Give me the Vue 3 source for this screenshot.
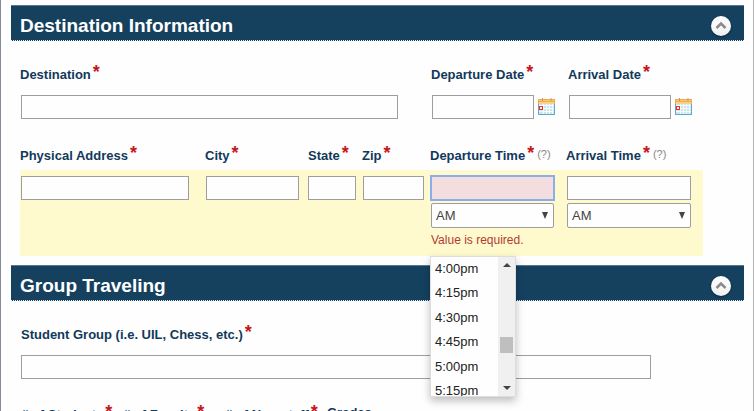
<script setup>
import { ref } from 'vue'

const tripDates = [
  { id: 'departure-date', label: 'Departure Date' },
  { id: 'arrival-date', label: 'Arrival Date' }
]
const address = [
  { id: 'street', label: 'Physical Address' },
  { id: 'city', label: 'City' },
  { id: 'state', label: 'State' },
  { id: 'zip', label: 'Zip' }
]
const tripTimes = [
  { id: 'departure-time', label: 'Departure Time' },
  { id: 'arrival-time', label: 'Arrival Time' }
]
const times = ['4:00pm', '4:15pm', '4:30pm', '4:45pm', '5:00pm', '5:15pm']
const counts = ['# of Students', '# of Faculty', '# of Non-staff']
const departureTime = ref('')

function pick(time) {
  departureTime.value = time
}
</script>

<template>
  <main class="page">
    <section>
      <header class="bar">
        <h2>Destination Information</h2>
        <button type="button" class="toggle" aria-label="Collapse Destination Information">
          <svg viewBox="0 0 20 20"><path d="M5.500 12 10 7.500l4.500 4.500" /></svg>
        </button>
      </header>

      <div class="form">
        <div class="trip">
          <div class="cell wide">
            <label for="destination">Destination<b class="star">*</b></label>
            <input id="destination" type="text" />
          </div>
          <div v-for="d in tripDates" :key="d.id" class="cell">
            <label :for="d.id">{{ d.label }}<b class="star">*</b></label>
            <div class="date">
              <input :id="d.id" type="text" />
              <button type="button" class="calendar" :aria-label="d.label">
                <svg viewBox="0 0 18 18">
                  <rect x="0" y="3" width="17" height="14" fill="#5eaacb" />
                  <rect x="1" y="5" width="15" height="11" fill="#c9e6ec" />
                  <rect x="0" y="1" width="17" height="5" fill="#f5a850" />
                  <rect x="1" y="2" width="15" height="1" fill="#fbd04e" />
                  <rect x="1" y="4" width="15" height="2" fill="#fbcf93" />
                  <path d="M4.500 0v3M13 0v3" stroke="#a79e9b" />
                  <path d="M1 7.500h15M1 10.500h15M1 13.500h15M5.500 6v10M8.500 6v10M11.500 6v10M14.500 6v10" stroke="#f4fbfc" />
                  <rect x="1.500" y="8.500" width="3" height="3" fill="#fff" stroke="#ef3028" />
                </svg>
              </button>
            </div>
          </div>
        </div>

        <div class="columns names">
          <label v-for="f in address" :key="f.id" :for="f.id">{{ f.label }}<b class="star">*</b></label>
          <label v-for="t in tripTimes" :key="t.id" :for="t.id">{{ t.label }}<b class="star">*</b><span class="hint">(?)</span></label>
        </div>
        <div class="columns fields">
          <div v-for="f in address" :key="f.id" class="field" :class="f.id">
            <input :id="f.id" type="text" />
          </div>
          <div class="field time">
            <input id="departure-time" v-model="departureTime" class="invalid" type="text" />
            <div class="select">
              <select aria-label="Departure AM or PM"><option>AM</option><option>PM</option></select>
            </div>
            <p class="error">Value is required.</p>
            <div class="menu">
              <ul>
                <li v-for="time in times" :key="time">
                  <button type="button" @click="pick(time)">{{ time }}</button>
                </li>
              </ul>
              <div class="track">
                <i class="up"></i>
                <i class="thumb"></i>
                <i class="down"></i>
              </div>
            </div>
          </div>
          <div class="field time">
            <input id="arrival-time" type="text" />
            <div class="select">
              <select aria-label="Arrival AM or PM"><option>AM</option><option>PM</option></select>
            </div>
          </div>
        </div>
      </div>
    </section>

    <section>
      <header class="bar second">
        <h2>Group Traveling</h2>
        <button type="button" class="toggle" aria-label="Collapse Group Traveling">
          <svg viewBox="0 0 20 20"><path d="M5.500 12 10 7.500l4.500 4.500" /></svg>
        </button>
      </header>
      <div class="form group">
        <label for="student-group">Student Group (i.e. UIL, Chess, etc.)<b class="star">*</b></label>
        <input id="student-group" type="text" />
        <div class="counts">
          <span v-for="c in counts" :key="c">{{ c }}<b class="star">*</b></span>
          <span class="grades">Grades</span>
        </div>
      </div>
    </section>
  </main>
</template>

<style>
body {
  margin: 0;
  background: #fff;
}
</style>

<style scoped>
* {
  box-sizing: border-box;
}
.page {
  height: 100vh;
  overflow: hidden;
  padding: 5px 9px 0 10px;
  border-left: 1px solid #858b98;
  border-right: 1px solid #b4b4b4;
  background: #fefefe;
  color: #12395a;
  font-family: "Liberation Sans", Arial, sans-serif;
  font-size: 13px;
}
.bar {
  display: flex;
  align-items: center;
  justify-content: space-between;
  height: 36px;
  padding: 5px 13px 0 9px;
  border-top: 1px solid #59788f;
  border-bottom: 1px dotted #e8eef2;
  background: #15415f;
}
.second {
  margin-top: 9px;
}
h2 {
  margin: 0;
  color: #fff;
  font-size: 19px;
  line-height: 24px;
}
.toggle {
  width: 20px;
  height: 20px;
  padding: 0;
  border: 0;
  border-radius: 50%;
  background: linear-gradient(#fff, #f0f0f0);
  box-shadow: 0 1px 2px #0a2438;
}
.toggle svg {
  display: block;
  fill: none;
  stroke: #8b8b8b;
  stroke-width: 2.5;
}
.form {
  padding: 0 41px 0 9px;
}
label,
.counts span {
  display: block;
  font-weight: bold;
  line-height: 16px;
  white-space: nowrap;
}
.star {
  position: relative;
  top: -1px;
  margin-left: 2px;
  color: #c4161c;
  font-size: 18px;
  line-height: 1px;
}
.hint {
  margin-left: 3px;
  color: #888;
  font-size: 11px;
  font-weight: normal;
  line-height: 1px;
  vertical-align: 2px;
}
input,
select {
  display: block;
  width: 100%;
  height: 24px;
  margin: 0;
  padding: 0 4px;
  border: 1px solid #9d9da2;
  border-radius: 0;
  background: #fefefe;
  color: #444;
  font: inherit;
  outline: 0;
}
.trip {
  display: grid;
  grid-template-columns: 399fr 125fr 125fr;
  column-gap: 12px;
  padding: 26px 10px 0 0;
}
.cell input {
  margin-top: 12px;
}
.wide {
  padding-right: 21px;
}
.wide input {
  width: calc(100% - 1px);
  margin-left: 1px;
}
.date {
  display: flex;
  align-items: flex-end;
  gap: 4px;
  padding-left: 1px;
}
.calendar {
  flex: none;
  width: 18px;
  height: 18px;
  margin-bottom: 3px;
  padding: 0;
  border: 0;
  background: none;
}
.calendar svg {
  display: block;
}
.columns {
  display: grid;
  grid-template-columns: 185fr 103fr 54fr 68fr 136fr 137fr;
}
.names {
  padding: 29px 0 6px;
}
.fields {
  height: 86px;
  padding-top: 6px;
  background: #fffacd;
}
.field {
  padding: 0 12px 0 1px;
}
.street {
  padding-right: 16px;
}
.city {
  padding-right: 9px;
}
.state,
.zip {
  padding-right: 6px;
}
.state {
  padding-left: 0;
}
.time {
  position: relative;
}
.invalid {
  border-color: #8badeb;
  background: #f3dddf;
  box-shadow: 0 0 0 1px #8badeb;
}
.select {
  position: relative;
  margin-top: 3px;
}
.select::after {
  position: absolute;
  top: 9px;
  right: 6px;
  border: solid transparent;
  border-width: 7px 3px 0;
  border-top-color: #444;
  content: "";
  pointer-events: none;
}
select {
  height: 25px;
  border-radius: 2px;
  appearance: none;
}
.error {
  margin: 4px 0 0;
  color: #b33a34;
  font-size: 12px;
  line-height: 16px;
  white-space: nowrap;
}
.menu {
  position: absolute;
  z-index: 1;
  top: 80px;
  left: 0;
  display: flex;
  width: 86px;
  height: 141px;
  overflow: hidden;
  border: 1px solid #ddd;
  background: #fefefe;
  box-shadow: 0 4px 8px rgba(0, 0, 0, 0.25);
}
ul {
  flex: 1;
  margin: 0;
  padding: 0;
  list-style: none;
}
li button {
  display: block;
  width: 100%;
  padding: 0 4px;
  border: 0;
  background: none;
  color: #222;
  font: inherit;
  line-height: 1.88;
  text-align: left;
}
.track {
  display: flex;
  flex-direction: column;
  align-items: center;
  width: 17px;
  padding: 6px 0;
  background: #f0f0f0;
}
.up,
.down {
  border: solid transparent;
  border-width: 0 4px 4px;
  border-bottom-color: #444;
}
.down {
  border-width: 4px 4px 0;
  border-top-color: #444;
}
.thumb {
  width: 13px;
  height: 16px;
  margin: 70px 0 33px;
  background: #bfbfbf;
}
.group {
  padding: 26px 93px 0 10px;
}
.group input {
  margin-top: 12px;
}
.counts {
  display: grid;
  grid-template-columns: repeat(4, 102px);
  padding-top: 28px;
}
.counts .grades {
  line-height: 12px;
}
</style>
